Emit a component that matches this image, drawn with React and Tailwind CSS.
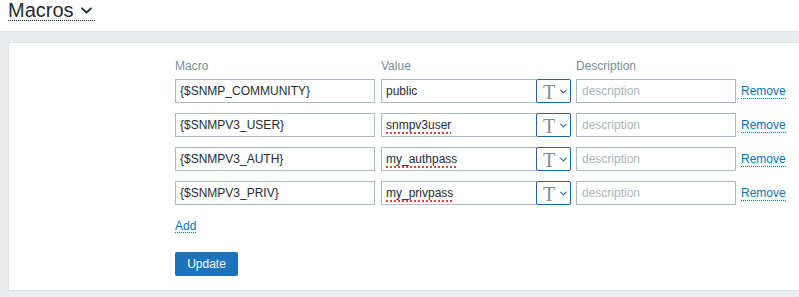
import React from 'react';

const macros = [
  { macro: '{$SNMP_COMMUNITY}', value: 'public', spell: false },
  { macro: '{$SNMPV3_USER}', value: 'snmpv3user', spell: true },
  { macro: '{$SNMPV3_AUTH}', value: 'my_authpass', spell: true },
  { macro: '{$SNMPV3_PRIV}', value: 'my_privpass', spell: true },
];

const Chevron = ({ className, stroke = 'currentColor', width = 1.5 }) => (
  <svg viewBox="0 0 10 6" className={className} fill="none">
    <path d="M1 1l4 4 4-4" stroke={stroke} strokeWidth={width} strokeLinecap="round" strokeLinejoin="round" />
  </svg>
);

const MacroRow = ({ item }) => (
  <div className="flex items-center h-[24px]">
    <div className="w-[200px] h-[24px] border border-[#acbbc2] pl-[4px] flex items-center text-[12px] text-[#1f2c33]">
      {item.macro}
    </div>
    <div className="ml-[6px] flex">
      <div className="w-[156px] h-[24px] border border-[#acbbc2] pl-[4px] flex items-center text-[12px] text-[#1f2c33]">
        <span className={item.spell ? 'underline decoration-dotted decoration-[#e0403a] decoration-2 underline-offset-[3px]' : ''}>
          {item.value}
        </span>
      </div>
      <button className="-ml-px w-[35px] h-[24px] border border-[#1f65a6] rounded-[2px] flex items-center pl-[6px] bg-white">
        <span className="font-['Liberation_Serif',serif] text-[20px] leading-none text-[#7c8d97] mt-[1px]">T</span>
        <Chevron className="w-[7px] h-[5px] ml-[5px] text-[#1f65a6]" />
      </button>
    </div>
    <div className="ml-[5px] w-[160px] h-[24px] border border-[#acbbc2] pl-[5px] flex items-center text-[12px] text-[#acb4b9]">
      description
    </div>
    <a className="ml-[5px] text-[12px] leading-[14px] text-[#0275b8] border-b border-dotted border-[#0275b8]">Remove</a>
  </div>
);

export default function App() {
  return (
    <div className="w-[799px] h-[297px] bg-white font-['Liberation_Sans',Arial,sans-serif] overflow-hidden">
      <div className="h-[31px] pl-[8px] flex items-start">
        <div className="flex items-center border-b border-dotted border-[#1f2c33] h-[21px]">
          <span className="text-[20px] leading-[20px] text-[#1f2c33]">Macros</span>
          <Chevron className="w-[11px] h-[7px] ml-[7px] mr-[3px] text-[#1f2c33]" width={1.7} />
        </div>
      </div>
      <div className="bg-[#ebeef0] border-t border-[#dfe4e7] pl-[8px] pt-[10px] pb-[6px]">
        <div className="bg-white border border-r-0 border-[#dfe4e7] pt-[16px] pb-[14px] pl-[166px]">
          <div className="flex text-[12px] leading-[14px] text-[#768d99] mb-[6px]">
            <div className="w-[200px]">Macro</div>
            <div className="ml-[6px] w-[190px]">Value</div>
            <div className="ml-[5px]">Description</div>
          </div>
          <div className="flex flex-col gap-[10px]">
            {macros.map((m) => (
              <MacroRow key={m.macro} item={m} />
            ))}
          </div>
          <div className="mt-[14px] h-[14px] flex">
            <a className="text-[12px] leading-[14px] text-[#0275b8] border-b border-dotted border-[#0275b8]">Add</a>
          </div>
          <button className="mt-[19px] w-[63px] h-[24px] rounded-[2px] bg-[#1b74bb] text-white text-[12px] flex items-center justify-center">
            Update
          </button>
        </div>
      </div>
    </div>
  );
}
